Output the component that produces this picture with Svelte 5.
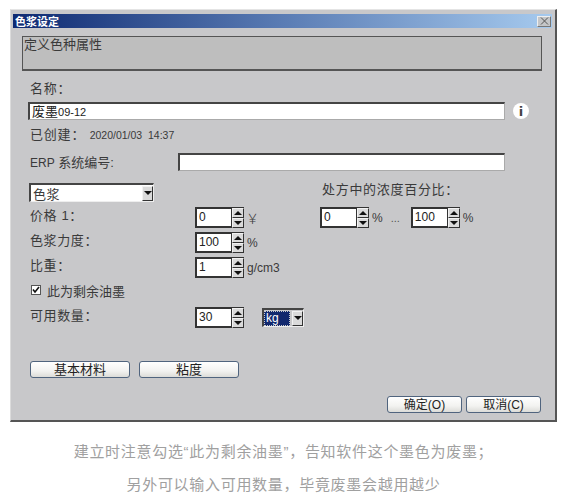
<script lang="ts">
  const rows = [
    { label: '色浆力度：', value: '100', unit: '%' },
    { label: '比重：', value: '1', unit: 'g/cm3' }
  ];
</script>

{#snippet spinner(value: string, unit = '')}
  <div class="spinner">
    <div class="spinner__field">{value}</div>
    <div class="spinner__arrows">
      <span class="arrow-btn"><i class="tri tri--up"></i></span>
      <span class="arrow-btn"><i class="tri tri--down"></i></span>
    </div>
    {#if unit}<span class="unit" class:unit--yen={unit === '￥'}>{unit}</span>{/if}
  </div>
{/snippet}

<div class="dialog">
  <header class="titlebar">
    <span>色浆设定</span>
    <span class="close">
      <svg width="9" height="8" viewBox="0 0 9 8"><path d="M1 0.5 8 7.5M8 0.5 1 7.5" stroke="#555" fill="none" /></svg>
    </span>
  </header>

  <div class="content">
    <div class="group">定义色种属性</div>

    <div class="label-line name-label">名称：</div>
    <div class="name-row">
      <div class="field name-field"><span class="cjk-value">废墨</span>09-12</div>
      <span class="info">i</span>
    </div>

    <div class="label-line created">已创建： <span class="latin">2020/01/03&nbsp;&nbsp;14:37</span></div>

    <div class="erp-row">
      <span class="erp-label"><span class="latin-lg">ERP</span> 系统编号:</span>
      <div class="field erp-field"></div>
    </div>

    <div class="props">
      <div class="props__left">
        <div class="combo">
          <span class="combo__text">色浆</span>
          <span class="arrow-btn combo__btn"><i class="tri tri--down"></i></span>
        </div>
        <div class="row price-row">
          <span class="row__label">价格 1：</span>
          {@render spinner('0', '￥')}
        </div>
      </div>
      <div class="props__right">
        <div class="conc-label">处方中的浓度百分比：</div>
        <div class="conc-row">
          {@render spinner('0', '%')}
          <span class="dots">...</span>
          {@render spinner('100', '%')}
        </div>
      </div>
    </div>

    {#each rows as row}
      <div class="row stacked">
        <span class="row__label">{row.label}</span>
        {@render spinner(row.value, row.unit)}
      </div>
    {/each}

    <div class="check-row">
      <span class="check">
        <svg width="8" height="8" viewBox="0 0 8 8"><path d="M1 3.5 3 6 7 1" stroke="#111" stroke-width="1.6" fill="none" /></svg>
      </span>
      <span>此为剩余油墨</span>
    </div>

    <div class="row qty-row">
      <span class="row__label">可用数量：</span>
      {@render spinner('30')}
      <div class="combo combo--unit">
        <span class="combo__text combo__text--selected">kg</span>
        <span class="arrow-btn combo__btn"><i class="tri tri--down"></i></span>
      </div>
    </div>

    <div class="actions">
      <button class="btn btn--wide">基本材料</button>
      <button class="btn btn--wide">粘度</button>
    </div>

    <div class="footer">
      <button class="btn btn--foot">确定(O)</button>
      <button class="btn btn--foot">取消(C)</button>
    </div>
  </div>
</div>

<div class="caption">
  <p>建立时注意勾选“此为剩余油墨”，告知软件这个墨色为废墨；</p>
  <p>另外可以输入可用数量，毕竟废墨会越用越少</p>
</div>

<style>
  :global(body) {
    background: #fff;
    font-family: "Liberation Sans", "Noto Sans CJK SC", sans-serif;
  }

  .dialog {
    box-sizing: border-box;
    width: 547px;
    height: 413px;
    margin: 9px 0 0 10px;
    padding: 4px 3px 0 3px;
    background: #c8c8ca;
    border-top: 1px solid #e4e4e4;
    border-left: 1px solid #dcdcdc;
    border-right: 2px solid #555;
    border-bottom: 2px solid #555;
    color: #3a3a3a;
    font-size: 13px;
  }

  .titlebar {
    display: flex;
    align-items: center;
    justify-content: space-between;
    height: 14px;
    margin-left: -1px;
    padding: 0 1px 0 2px;
    background: linear-gradient(90deg, #0e2a72 0%, #5a7cb4 50%, #a6caee 100%);
    color: #fff;
    font-family: "Noto Sans CJK SC", sans-serif;
    font-size: 11px;
    font-weight: 700;
  }

  .close {
    display: flex;
    align-items: center;
    justify-content: center;
    box-sizing: border-box;
    width: 14px;
    height: 11px;
    background: #c4c6c8;
    border: 1px solid #eee;
    border-right-color: #777;
    border-bottom-color: #777;
  }

  .content {
    display: flex;
    flex-direction: column;
    margin-left: -1px;
  }

  .group {
    box-sizing: border-box;
    width: 520px;
    height: 35px;
    margin: 8px 0 0 9px;
    padding-left: 1px;
    background: #bebebe;
    border: 1px solid #555;
    border-bottom-width: 2px;
    font-size: 13px;
    line-height: 15px;
  }

  .label-line {
    height: 18px;
    line-height: 18px;
    padding-left: 17px;
  }

  .name-label {
    margin-top: 9px;
    letter-spacing: 0.8px;
  }

  .name-row {
    display: flex;
    align-items: center;
    margin: 4px 0 0 15px;
  }

  .field {
    box-sizing: border-box;
    height: 18px;
    background: #fff;
    border: 2px solid #444;
    border-right: 1px solid #aaa;
    border-bottom: 1px solid #aaa;
    color: #222;
  }

  .name-field {
    width: 477px;
    padding-left: 2px;
    font-size: 11px;
    line-height: 15px;
  }

  .cjk-value {
    font-size: 13px;
  }

  .info {
    display: flex;
    align-items: center;
    justify-content: center;
    width: 16px;
    height: 16px;
    margin-left: 8px;
    border-radius: 50%;
    background: #fff;
    color: #444;
    font-family: "DejaVu Sans", sans-serif;
    font-size: 13px;
    font-weight: 700;
  }

  .created {
    margin-top: 6px;
    letter-spacing: 0.8px;
  }

  .latin {
    font-size: 10.5px;
    letter-spacing: 0;
  }

  .erp-row {
    display: flex;
    align-items: center;
    margin-top: 8px;
    padding-left: 17px;
  }

  .erp-label {
    width: 148px;
    font-size: 13px;
  }

  .latin-lg {
    font-size: 12px;
  }

  .erp-field {
    width: 327px;
  }

  .props {
    display: flex;
    margin-top: 12px;
  }

  .props__left {
    width: 307px;
    padding-left: 16px;
    box-sizing: border-box;
  }

  .combo {
    display: flex;
    align-items: center;
    justify-content: space-between;
    box-sizing: border-box;
    width: 125px;
    height: 19px;
    background: #fff;
    border: 2px solid #444;
    border-right: 1px solid #eee;
    border-bottom: 1px solid #eee;
  }

  .combo__text {
    padding-left: 2px;
    font-size: 13px;
    letter-spacing: 0.5px;
  }

  .combo__btn {
    width: 11px;
    height: 15px;
  }

  .combo--unit {
    width: 42px;
    margin-left: 18px;
    background: #c8c8ca;
  }

  .combo__text--selected {
    flex: 1;
    margin-right: 2px;
    padding-left: 2px;
    background: #12286e;
    color: #fff;
    font-size: 12px;
    letter-spacing: 0;
    line-height: 15px;
    outline: 1px dotted #ccc;
    outline-offset: -1px;
  }

  .arrow-btn {
    display: flex;
    align-items: center;
    justify-content: center;
    box-sizing: border-box;
    background: #dadada;
    border: 1px solid #f2f2f2;
    border-right-color: #333;
    border-bottom-color: #333;
  }

  .tri {
    display: block;
    width: 0;
    height: 0;
    border-left: 4px solid transparent;
    border-right: 4px solid transparent;
  }

  .tri--up {
    border-bottom: 4px solid #111;
  }

  .tri--down {
    border-top: 4px solid #111;
  }

  .row {
    display: flex;
    align-items: center;
    height: 21px;
  }

  .row__label {
    flex: none;
    width: 165px;
    margin-top: -6px;
    letter-spacing: 0.6px;
  }

  .price-row {
    margin-top: 5px;
  }

  .price-row .row__label {
    width: 166px;
    padding-left: 1px;
    box-sizing: border-box;
  }

  .stacked,
  .qty-row {
    padding-left: 17px;
  }

  .stacked {
    margin-top: 4px;
  }

  .spinner {
    display: flex;
    align-items: center;
  }

  .spinner__field {
    box-sizing: border-box;
    width: 37px;
    height: 21px;
    padding-left: 2px;
    background: #fff;
    border: 2px solid #333;
    border-right-width: 1px;
    font-size: 12px;
    line-height: 17px;
    color: #222;
  }

  .spinner__arrows {
    display: flex;
    flex-direction: column;
    width: 12px;
    height: 21px;
    border-top: 1px solid #333;
    box-sizing: border-box;
  }

  .spinner__arrows .arrow-btn {
    height: 10px;
  }

  .unit {
    margin-left: 3px;
    font-size: 12px;
  }

  .unit--yen {
    margin-left: 2px;
    font-size: 13px;
    font-weight: 300;
  }

  .props__right {
    padding-left: 0;
  }

  .conc-label {
    height: 14px;
    padding-left: 2px;
    line-height: 14px;
    letter-spacing: 0.7px;
  }

  .conc-row {
    display: flex;
    align-items: center;
    margin-top: 10px;
  }

  .dots {
    margin: 0 11px 0 8px;
    font-size: 11px;
    color: #555;
  }

  .check-row {
    display: flex;
    align-items: center;
    gap: 6px;
    height: 18px;
    padding-bottom: 2px;
    margin: 3px 0 0 18px;
  }

  .check {
    display: flex;
    align-items: center;
    justify-content: center;
    box-sizing: border-box;
    width: 10px;
    height: 10px;
    background: #fff;
    border: 1px solid #555;
  }

  .qty-row {
    margin-top: 6px;
  }

  .actions {
    display: flex;
    gap: 9px;
    margin: 33px 0 0 17px;
  }

  .footer {
    display: flex;
    justify-content: flex-end;
    gap: 4px;
    margin: 18px 11px 0 0;
  }

  .btn {
    box-sizing: border-box;
    height: 17px;
    padding: 0;
    background: linear-gradient(180deg, #fff 0%, #f2f2f0 60%, #dcdcd8 100%);
    border: 1px solid #50647e;
    border-radius: 3px;
    color: #222;
    font-family: inherit;
    font-size: 13px;
    line-height: 14px;
  }

  .btn--wide {
    width: 100px;
  }

  .btn--foot {
    width: 75px;
    font-size: 12px;
  }

  .caption {
    margin-top: 19px;
    padding-right: 2px;
    color: #a0a0a0;
    font-size: 15px;
    letter-spacing: 0.7px;
    text-align: center;
  }

  .caption p {
    margin: 0 0 11px;
    height: 22px;
    line-height: 22px;
  }
</style>
